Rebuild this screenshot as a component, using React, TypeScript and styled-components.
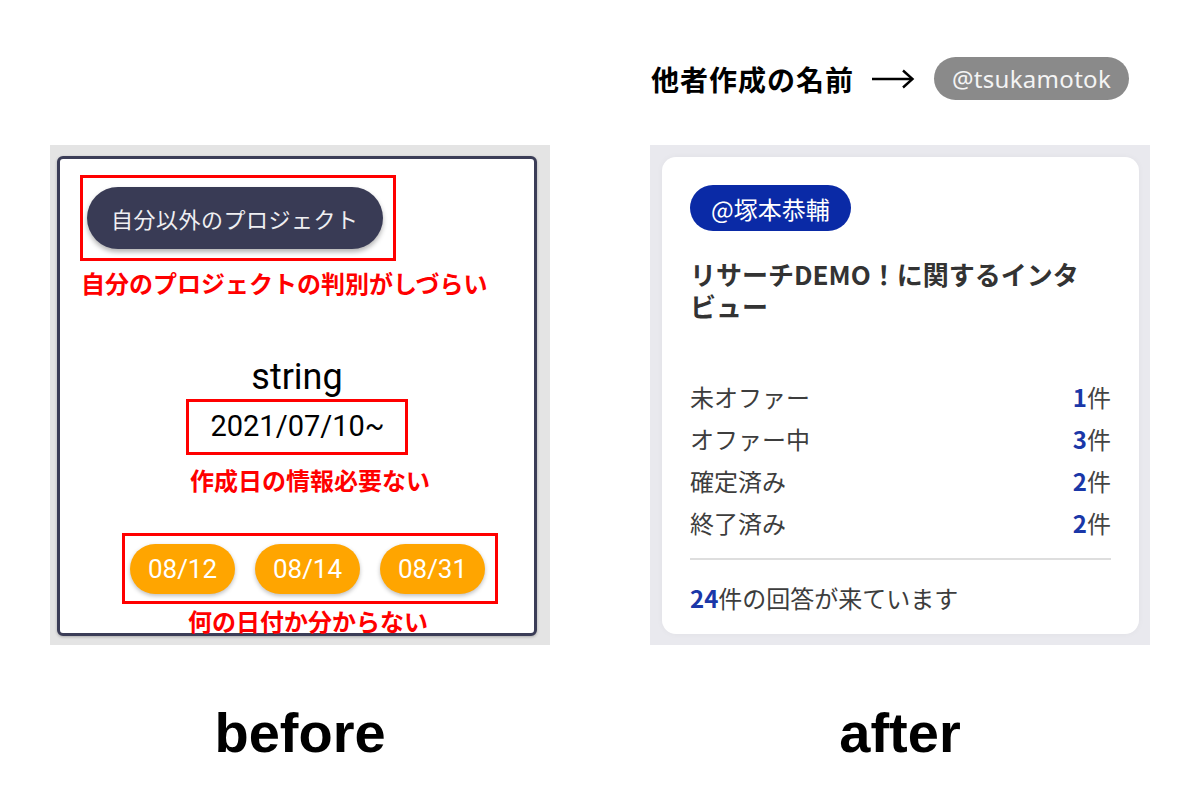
import React from "react";
import styled, { createGlobalStyle } from "styled-components";

const GlobalStyle = createGlobalStyle`
  html, body { margin: 0; padding: 0; background: #ffffff; }
  body { font-family: "Noto Sans CJK JP", "Noto Sans", sans-serif; }
`;

const Page = styled.div`
  width: 1200px;
  height: 800px;
  box-sizing: border-box;
  padding-left: 50px;
  display: grid;
  grid-template-columns: 500px 500px;
  grid-template-rows: 145px 500px auto;
  column-gap: 100px;
`;

const Header = styled.div`
  grid-column: 2;
  grid-row: 1;
  display: flex;
  align-items: center;
  height: 43px;
  margin-top: 57px;
  padding-left: 1px;
`;

const HeaderText = styled.span`
  font-family: "Noto Sans CJK JP", sans-serif;
  font-weight: 700;
  font-size: 28px;
  line-height: 1;
  color: #000;
  letter-spacing: 1px;
`;

const ArrowIcon = styled.svg`
  margin-left: 17px;
  margin-right: 19px;
  flex: none;
`;

const HandleTag = styled.span`
  height: 43px;
  width: 195px;
  border-radius: 22px;
  background: #8a8a8a;
  color: #f4f4f4;
  display: inline-flex;
  align-items: center;
  justify-content: center;
  font-family: "Noto Sans", sans-serif;
  font-size: 24px;
  letter-spacing: 0.3px;
`;

const Panel = styled.div<{ $col: number; $bg: string; $pad: string }>`
  grid-column: ${(p) => p.$col};
  grid-row: 2;
  background: ${(p) => p.$bg};
  padding: ${(p) => p.$pad};
  box-sizing: border-box;
  display: flex;
`;

const BeforeCard = styled.div`
  width: 480px;
  height: 480px;
  box-sizing: border-box;
  border: 3px solid #3b3d57;
  border-radius: 6px;
  background: #ffffff;
  box-shadow: 0 1px 3px rgba(0, 0, 0, 0.25);
  display: flex;
  flex-direction: column;
  align-items: flex-start;
  font-family: Roboto, "Noto Sans CJK JP", sans-serif;
`;

const Highlight = styled.div<{ $ml?: number; $mt: number; $pad: string; $center?: boolean }>`
  border: 3px solid #ff0000;
  padding: ${(p) => p.$pad};
  margin-top: ${(p) => p.$mt}px;
  margin-left: ${(p) => (p.$center ? 0 : p.$ml ?? 0)}px;
  align-self: ${(p) => (p.$center ? "center" : "flex-start")};
  display: flex;
  gap: 20px;
`;

const DarkPill = styled.div`
  height: 62px;
  border-radius: 31px;
  background: #393b55;
  color: #efeff2;
  padding: 0 24px;
  display: flex;
  align-items: center;
  font-family: "Noto Sans CJK JP", sans-serif;
  font-size: 22px;
  letter-spacing: 0.5px;
  box-shadow: 0 3px 5px rgba(0, 0, 0, 0.3);
`;

const RedNote = styled.div<{ $ml: number; $mt: number }>`
  margin-left: ${(p) => p.$ml}px;
  margin-top: ${(p) => p.$mt}px;
  color: #ff0000;
  font-family: "Noto Sans CJK JP", sans-serif;
  font-weight: 700;
  font-size: 24px;
  line-height: 24px;
  white-space: nowrap;
`;

const ProjectName = styled.div`
  align-self: center;
  margin-top: 64px;
  font-family: Roboto, sans-serif;
  font-size: 36px;
  line-height: 36px;
  color: #000;
`;

const DateText = styled.div`
  font-family: Roboto, sans-serif;
  font-size: 29px;
  line-height: 47px;
  padding: 0 20px 0 21px;
  color: #000;
`;

const DatePill = styled.div`
  width: 105px;
  height: 50px;
  border-radius: 25px;
  background: #ffa500;
  color: #ffffff;
  display: flex;
  align-items: center;
  justify-content: center;
  font-family: Roboto, sans-serif;
  font-size: 26px;
  box-shadow: 0 2px 4px rgba(0, 0, 0, 0.25);
`;

const AfterCard = styled.div`
  width: 477px;
  height: 477px;
  box-sizing: border-box;
  background: #ffffff;
  border-radius: 14px;
  box-shadow: 0 0 6px rgba(0, 0, 0, 0.04);
  padding: 28px 28px 0 28px;
  display: flex;
  flex-direction: column;
  align-items: stretch;
  font-family: "Noto Sans CJK JP", sans-serif;
  color: #3d3d3d;
`;

const NameTag = styled.span`
  align-self: flex-start;
  height: 46px;
  border-radius: 23px;
  background: #0a2aa6;
  color: #ffffff;
  padding: 0 21px;
  display: inline-flex;
  align-items: center;
  font-size: 24px;
`;

const Title = styled.div`
  margin-top: 27px;
  max-width: 405px;
  font-size: 26px;
  line-height: 32px;
  font-weight: 700;
  color: #333333;
`;

const StatusList = styled.div`
  margin-top: 54px;
  display: flex;
  flex-direction: column;
`;

const StatusRow = styled.div`
  display: flex;
  justify-content: space-between;
  align-items: center;
  height: 42px;
  font-size: 24px;
  line-height: 42px;
  color: #3d3d3d;
`;

const Count = styled.span`
  color: #444;
`;

const Num = styled.b`
  color: #1a37a8;
  font-weight: 700;
`;

const Divider = styled.hr`
  margin: 14px 0 0 0;
  border: none;
  height: 2px;
  background: #dedede;
`;

const Summary = styled.div`
  margin-top: 17px;
  font-size: 24px;
  line-height: 42px;
  color: #3d3d3d;
`;

const Caption = styled.div<{ $col: number }>`
  grid-column: ${(p) => p.$col};
  grid-row: 3;
  justify-self: center;
  margin-top: 60px;
  font-family: "Liberation Sans", Arial, sans-serif;
  font-weight: 700;
  font-size: 56px;
  line-height: 56px;
  color: #000;
`;

const statuses = [
  { label: "未オファー", n: 1 },
  { label: "オファー中", n: 3 },
  { label: "確定済み", n: 2 },
  { label: "終了済み", n: 2 },
];

export default function App() {
  return (
    <>
      <GlobalStyle />
      <Page>
        <Header>
          <HeaderText>他者作成の名前</HeaderText>
          <ArrowIcon width="44" height="22" viewBox="0 0 44 22">
            <path d="M1 11 H41" stroke="#000" strokeWidth="2.4" fill="none" />
            <path d="M32 2.5 L41.5 11 L32 19.5" stroke="#000" strokeWidth="2.4" fill="none" strokeLinejoin="miter" />
          </ArrowIcon>
          <HandleTag>@tsukamotok</HandleTag>
        </Header>

        <Panel $col={1} $bg="#e4e4e4" $pad="11px 13px 9px 7px">
          <BeforeCard>
            <Highlight $ml={20} $mt={16} $pad="9px 10px 9px 4px">
              <DarkPill>自分以外のプロジェクト</DarkPill>
            </Highlight>
            <RedNote $ml={21} $mt={10}>自分のプロジェクトの判別がしづらい</RedNote>
            <ProjectName>string</ProjectName>
            <Highlight $center $mt={4} $pad="1px 0 2px 0">
              <DateText>2021/07/10~</DateText>
            </Highlight>
            <RedNote $ml={130} $mt={13}>作成日の情報必要ない</RedNote>
            <Highlight $ml={62} $mt={41} $pad="8px 10px 7px 5px">
              <DatePill>08/12</DatePill>
              <DatePill>08/14</DatePill>
              <DatePill>08/31</DatePill>
            </Highlight>
            <RedNote $ml={128} $mt={5}>何の日付か分からない</RedNote>
          </BeforeCard>
        </Panel>

        <Panel $col={2} $bg="#e9e9ee" $pad="12px 11px 11px 12px">
          <AfterCard>
            <NameTag>@塚本恭輔</NameTag>
            <Title>リサーチDEMO！に関するインタビュー</Title>
            <StatusList>
              {statuses.map((s) => (
                <StatusRow key={s.label}>
                  <span>{s.label}</span>
                  <Count>
                    <Num>{s.n}</Num>件
                  </Count>
                </StatusRow>
              ))}
            </StatusList>
            <Divider />
            <Summary>
              <Num>24</Num>件の回答が来ています
            </Summary>
          </AfterCard>
        </Panel>

        <Caption $col={1}>before</Caption>
        <Caption $col={2}>after</Caption>
      </Page>
    </>
  );
}
